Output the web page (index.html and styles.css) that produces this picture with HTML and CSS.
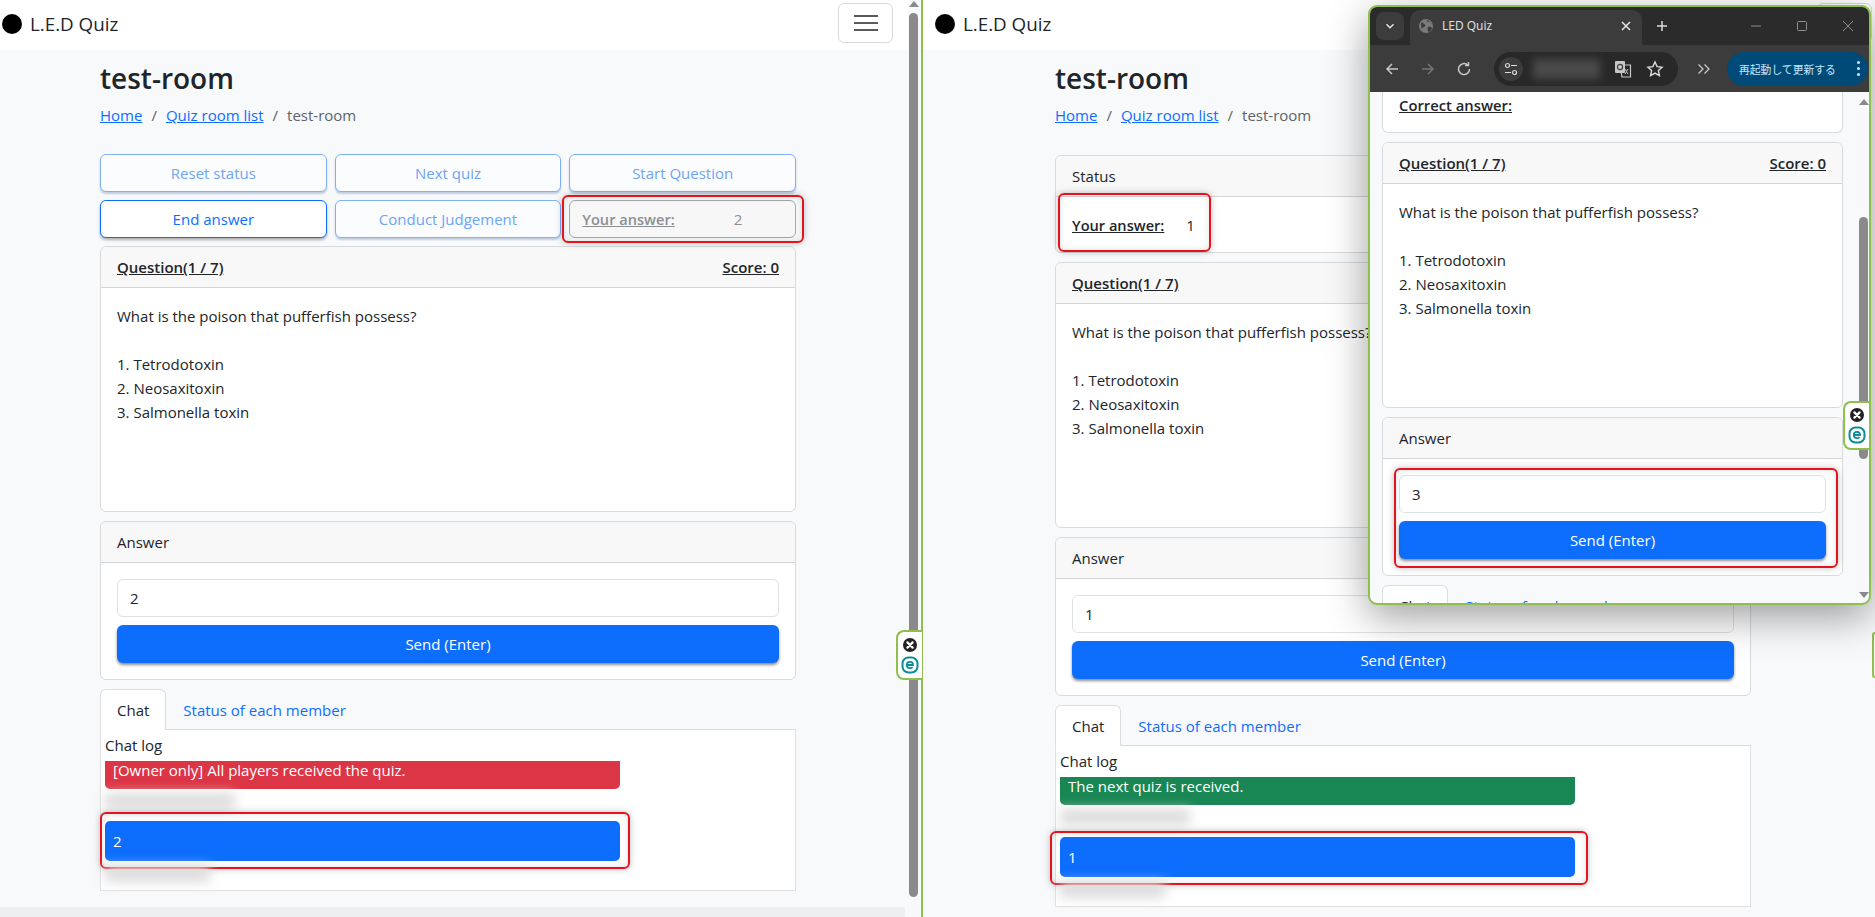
FILE: index.html
```html
<!DOCTYPE html>
<html>
<head>
  <title>LED Quiz</title>
  <link rel="stylesheet" href="styles.css">
</head>
<body>
  <div class="screen">

    <!-- owner side -->
    <section class="pane pane-owner">
      <div class="page">
        <nav class="navbar">
          <a class="brand"><span class="brand-dot"></span>L.E.D Quiz</a>
          <button class="toggler"><span></span><span></span><span></span></button>
        </nav>
        <main class="room">
          <h1>test-room</h1>
          <p class="crumbs"><a>Home</a><i>/</i><a>Quiz room list</a><i>/</i>test-room</p>

          <div class="controls">
            <button class="btn-line off">Reset status</button>
            <button class="btn-line off">Next quiz</button>
            <button class="btn-line off">Start Question</button>
            <button class="btn-line">End answer</button>
            <button class="btn-line off">Conduct Judgement</button>
            <div class="your-answer mark mark-owner"><u>Your answer:</u><span>2</span></div>
          </div>

          <div class="card">
            <div class="card-head"><u>Question(1 / 7)</u><u>Score: 0</u></div>
            <div class="card-body question">What is the poison that pufferfish possess?

1. Tetrodotoxin
2. Neosaxitoxin
3. Salmonella toxin</div>
          </div>

          <div class="card">
            <div class="card-head plain">Answer</div>
            <div class="card-body answer-form">
              <div class="input">2</div>
              <button class="btn-send">Send (Enter)</button>
            </div>
          </div>

          <div class="tabs">
            <a class="tab active">Chat</a>
            <a class="tab">Status of each member</a>
          </div>
          <div class="chat">
            <div class="chat-title">Chat log</div>
            <div class="bubble cut red">[Owner only] All players received the quiz.</div>
            <div class="who"><span class="smear w130"></span></div>
            <div class="bubble blue mark mark-bubble-l">2</div>
            <div class="who tail"><span class="smear w105"></span></div>
          </div>
        </main>
        <div class="hscroll"></div>
      </div>
      <div class="scrollbar">
        <span class="arrow-up"></span>
        <span class="thumb"></span>
      </div>
      <div class="eset eset-left">
        <svg width="16" height="16" viewBox="0 0 16 16"><circle cx="8" cy="8" r="7" fill="#222"/><path d="M5.4 5.4l5.2 5.2M10.6 5.4l-5.2 5.2" stroke="#fff" stroke-width="2.2" stroke-linecap="round"/></svg>
        <svg width="18" height="18" viewBox="0 0 18 18"><rect x="1.5" y="1.5" width="15" height="15" rx="6" fill="none" stroke="#0b8c96" stroke-width="2"/><path d="M5.8 9h6.2c0-2-1.2-3.2-3-3.2S5.8 7 5.8 9s1.2 3.2 3.2 3.2c1.2 0 2-.4 2.6-1.2" fill="none" stroke="#0b8c96" stroke-width="1.8"/></svg>
      </div>
    </section>

    <!-- player side -->
    <section class="pane pane-player">
      <nav class="navbar">
        <a class="brand"><span class="brand-dot"></span>L.E.D Quiz</a>
        <button class="toggler"><span></span><span></span><span></span></button>
      </nav>
      <main class="room">
        <h1>test-room</h1>
        <p class="crumbs"><a>Home</a><i>/</i><a>Quiz room list</a><i>/</i>test-room</p>

        <div class="card status-card">
          <div class="card-head plain">Status</div>
          <div class="card-body status-body">
            <div class="status-answer mark mark-player"><u>Your answer:</u><span>1</span></div>
          </div>
        </div>

        <div class="card">
          <div class="card-head"><u>Question(1 / 7)</u><u>Score: 0</u></div>
          <div class="card-body question">What is the poison that pufferfish possess?

1. Tetrodotoxin
2. Neosaxitoxin
3. Salmonella toxin</div>
        </div>

        <div class="card">
          <div class="card-head plain">Answer</div>
          <div class="card-body answer-form">
            <div class="input">1</div>
            <button class="btn-send">Send (Enter)</button>
          </div>
        </div>

        <div class="tabs">
          <a class="tab active">Chat</a>
          <a class="tab">Status of each member</a>
        </div>
        <div class="chat">
          <div class="chat-title">Chat log</div>
          <div class="bubble cut green">The next quiz is received.</div>
          <div class="who"><span class="smear w130"></span></div>
          <div class="bubble blue mark mark-bubble-r">1</div>
          <div class="who tail"><span class="smear w105"></span></div>
        </div>
      </main>
      <div class="eset-peek"></div>
    </section>
  </div>

  <!-- second browser window on top -->
  <div class="window">
    <div class="tabstrip">
      <span class="tab-menu">
        <svg width="12" height="12" viewBox="0 0 12 12"><path d="M2.5 4.2L6 7.7l3.500-3.500" fill="none" stroke="#e3e3e3" stroke-width="1.5"/></svg>
      </span>
      <div class="win-tab">
        <svg width="14" height="14" viewBox="0 0 14 14"><circle cx="7" cy="7" r="7" fill="#7a7a7a"/><path d="M2 3.5c2 .2 3 1 4 2.2S5.5 8 4 8.5 2 10 2.5 11.5M8 .5C7.5 2 8.5 3 10 3s3 1 3.5 2M9 8c1.5-.5 3.5 0 4 1-.5 2-2 3.5-3.5 4C9 11.5 8 9.5 9 8z" fill="#3c3c3c"/></svg>
        <span class="win-title">LED Quiz</span>
        <svg class="win-close" width="10" height="10" viewBox="0 0 10 10"><path d="M1 1l8 8M9 1L1 9" stroke="#e8e8e8" stroke-width="1.5"/></svg>
      </div>
      <svg class="new-tab" width="12" height="12" viewBox="0 0 12 12"><path d="M6 1v10M1 6h10" stroke="#dcdcdc" stroke-width="1.5"/></svg>
      <div class="win-controls">
        <svg width="12" height="12" viewBox="0 0 12 12"><path d="M1 6h10" stroke="#8f8f8f"/></svg>
        <svg width="12" height="12" viewBox="0 0 12 12"><rect x="1.5" y="1.5" width="9" height="9" rx="1" fill="none" stroke="#8f8f8f"/></svg>
        <svg width="12" height="12" viewBox="0 0 12 12"><path d="M1 1l10 10M11 1L1 11" stroke="#8f8f8f"/></svg>
      </div>
    </div>
    <div class="toolbar">
      <svg class="tool" width="16" height="16" viewBox="0 0 16 16"><path d="M14 8H3M8 3L3 8l5 5" fill="none" stroke="#c7c7c7" stroke-width="1.5"/></svg>
      <svg class="tool" width="16" height="16" viewBox="0 0 16 16"><path d="M2 8h11M8 3l5 5-5 5" fill="none" stroke="#747474" stroke-width="1.5"/></svg>
      <svg class="tool" width="16" height="16" viewBox="0 0 16 16"><path d="M13.5 8A5.5 5.5 0 1 1 11.5 3.8M12.5 1v3.500H9" fill="none" stroke="#c7c7c7" stroke-width="1.5"/></svg>
      <div class="omnibox">
        <span class="site-info">
          <svg width="14" height="14" viewBox="0 0 14 14"><circle cx="3.5" cy="3.5" r="2" fill="none" stroke="#dcdcdc" stroke-width="1.2"/><path d="M7 3.5h6M1 10.5h6" stroke="#dcdcdc" stroke-width="1.2"/><circle cx="10.5" cy="10.5" r="2" fill="none" stroke="#dcdcdc" stroke-width="1.2"/></svg>
        </span>
        <span class="url-smear"></span>
        <svg width="18" height="18" viewBox="0 0 18 18"><path d="M6 5h10.5v12H8z" fill="none" stroke="#c7c7c7" stroke-width="1.2"/><rect x="1" y="1" width="10" height="12" rx="1" fill="#c7c7c7"/><circle cx="6" cy="7" r="2.6" fill="none" stroke="#3c3c3c" stroke-width="1.2"/><path d="M11 9l3 5M14 9l-3 5" stroke="#c7c7c7"/></svg>
        <svg width="18" height="18" viewBox="0 0 18 18"><path d="M9 2l2.1 4.6 5 .6-3.7 3.400 1 5L9 13.100l-4.400 2.500 1-5L1.900 7.200l5-.6z" fill="none" stroke="#dcdcdc" stroke-width="1.4"/></svg>
      </div>
      <svg class="more" width="14" height="12" viewBox="0 0 14 12"><path d="M1.5 1.5L6 6l-4.5 4.5M7.5 1.5L12 6l-4.500 4.500" fill="none" stroke="#c7c7c7" stroke-width="1.3"/></svg>
      <div class="update-pill">再起動して更新する<b class="dots"><span></span><span></span><span></span></b></div>
    </div>
    <div class="win-body">
      <div class="win-page">
        <div class="card card-clipped">
          <div class="card-body correct"><u>Correct answer:</u></div>
        </div>
        <div class="card">
          <div class="card-head"><u>Question(1 / 7)</u><u>Score: 0</u></div>
          <div class="card-body question">What is the poison that pufferfish possess?

1. Tetrodotoxin
2. Neosaxitoxin
3. Salmonella toxin</div>
        </div>
        <div class="card">
          <div class="card-head plain">Answer</div>
          <div class="card-body answer-form">
            <div class="mark mark-form">
              <div class="input">3</div>
              <button class="btn-send">Send (Enter)</button>
            </div>
          </div>
        </div>
        <div class="tabs">
          <a class="tab active">Chat</a>
          <a class="tab">Status of each member</a>
        </div>
      </div>
      <div class="scrollbar win-scrollbar">
        <span class="arrow-up"></span>
        <span class="thumb"></span>
        <span class="arrow-down"></span>
      </div>
      <div class="eset eset-win">
        <svg width="16" height="16" viewBox="0 0 16 16"><circle cx="8" cy="8" r="7" fill="#222"/><path d="M5.4 5.4l5.2 5.2M10.6 5.4l-5.2 5.2" stroke="#fff" stroke-width="2.2" stroke-linecap="round"/></svg>
        <svg width="18" height="18" viewBox="0 0 18 18"><rect x="1.5" y="1.5" width="15" height="15" rx="6" fill="none" stroke="#0b8c96" stroke-width="2"/><path d="M5.8 9h6.2c0-2-1.2-3.2-3-3.2S5.8 7 5.8 9s1.2 3.2 3.2 3.2c1.2 0 2-.4 2.6-1.2" fill="none" stroke="#0b8c96" stroke-width="1.8"/></svg>
      </div>
    </div>
  </div>
</body>
</html>
```

FILE: styles.css
```css
* {
  box-sizing: border-box;
}
html, body {
  margin: 0;
  height: 100%;
  overflow: hidden;
}
body {
  font-family: "Open Sans", "Noto Sans", sans-serif;
  font-size: 15px;
  line-height: 24px;
  color: #212529;
  background: #f8f9fb;
}
button {
  font: inherit;
}

/* panes */
.screen {
  display: flex;
  height: 917px;
}
.pane {
  position: relative;
  height: 917px;
}
.pane-owner {
  display: flex;
  flex: 0 0 923px;
  border-right: 2px solid #8fbf4d;
}
.pane-player {
  flex: 1;
  padding-right: 3px;
}
.page {
  display: flex;
  flex-direction: column;
  width: 908px;
}
.page .room {
  flex: 1;
}
.hscroll {
  height: 10px;
  width: 905px;
  background: #eeeff0;
}

/* navbar */
.navbar {
  display: flex;
  align-items: flex-start;
  justify-content: space-between;
  height: 50px;
  padding: 3px 15px 0 2px;
  background: #fff;
}
.pane-player .navbar {
  padding: 3px 0 0 12px;
}
.brand {
  display: flex;
  align-items: center;
  height: 42px;
  font-size: 18.8px;
  color: #212529;
}
.brand-dot {
  width: 20px;
  height: 20px;
  margin-right: 8px;
  border-radius: 50%;
  background: #000;
}
.toggler {
  display: flex;
  flex-direction: column;
  align-items: center;
  justify-content: center;
  gap: 5px;
  width: 55px;
  height: 40px;
  padding: 0;
  background: #fff;
  border: 1px solid #d9dadb;
  border-radius: 6px;
}
.toggler span {
  width: 24px;
  height: 2px;
  background: #5a5a5a;
}

/* room */
.room {
  padding-left: 100px;
  width: 796px;
}
.pane-player .room {
  padding-left: 132px;
  width: 828px;
}
h1 {
  margin: 11px 0 8px;
  font-size: 28px;
  line-height: 34px;
  font-weight: 600;
}
.crumbs {
  margin: 0 0 27px;
  color: #5c636a;
}
.crumbs a {
  color: #0d6efd;
  text-decoration: underline;
}
.crumbs i {
  font-style: normal;
  margin: 0 9px;
}
.pane-player .crumbs {
  margin-bottom: 28px;
}

/* controls */
.controls {
  display: grid;
  grid-template-columns: 1fr 1fr 1fr;
  gap: 8px;
  margin-bottom: 8px;
}
.btn-line {
  height: 38px;
  padding: 0;
  color: #0d6efd;
  background: #fff;
  border: 1px solid #0d6efd;
  border-radius: 6px;
  box-shadow: 0 2px 3px rgba(0, 0, 0, .3);
}
.btn-line.off {
  color: #6ea4f3;
  background: #fbfcfe;
  border-color: #7fb0f5;
  box-shadow: 0 2px 2px rgba(90, 120, 170, .35);
}
.your-answer {
  display: flex;
  align-items: center;
  height: 38px;
  padding-left: 12px;
  color: #8b8f93;
  background: #f7f7f7;
  border: 1px solid #a6a8aa;
  border-radius: 6px;
}
.your-answer u {
  font-size: 14.6px;
  font-weight: 600;
}
.your-answer span {
  margin-left: 59px;
}

/* cards */
.card {
  margin-bottom: 9px;
  background: #fff;
  border: 1px solid #d9dadc;
  border-radius: 6px;
}
.card-head {
  display: flex;
  justify-content: space-between;
  height: 41px;
  padding: 8px 16px 0;
  background: #f8f8f9;
  border-bottom: 1px solid #d4d5d7;
  border-radius: 6px 6px 0 0;
  font-weight: 600;
}
.card-head.plain {
  font-weight: 400;
}
.card-body {
  padding: 16px;
}
.question {
  height: 223px;
  white-space: pre-line;
}
.answer-form {
  height: 116px;
}
.input {
  height: 38px;
  padding: 6px 12px;
  background: #fff;
  border: 1px solid #dee2e6;
  border-radius: 6px;
}
.btn-send {
  display: block;
  width: 100%;
  height: 38px;
  margin-top: 8px;
  color: #fff;
  background: #0d6efd;
  border: 0;
  border-radius: 6px;
  box-shadow: 0 2px 3px rgba(0, 0, 0, .45);
}
.status-card {
  margin-bottom: 9px;
}
.status-body {
  height: 55px;
  padding: 16px 16px 0;
}
.status-answer {
  display: inline-flex;
  gap: 22px;
}
.status-answer u {
  font-size: 14.6px;
  font-weight: 600;
}

/* tabs + chat */
.tabs {
  display: flex;
  height: 41px;
  margin-top: 9px;
  border-bottom: 1px solid #d9dadc;
}
.tab {
  height: 41px;
  padding: 8px 16px;
  color: #0d6efd;
  border: 1px solid transparent;
  border-radius: 6px 6px 0 0;
}
.tab.active {
  color: #212529;
  background: #fff;
  border-color: #dcdddf #dcdddf #fff;
}
.chat {
  height: 161px;
  padding: 3px 4px 0;
  background: #fff;
  border: 1px solid #dfe0e2;
  border-top: 0;
}
.chat-title {
  margin-bottom: 4px;
}
.bubble {
  width: 515px;
  padding: 0 8px;
  color: #fff;
  border-radius: 5px;
}
.bubble.cut {
  height: 28px;
  line-height: 18px;
  border-radius: 0 0 5px 5px;
}
.bubble.blue {
  height: 40px;
  line-height: 40px;
  margin-top: 8px;
}
.red {
  background: #dc3545;
}
.green {
  background: #198754;
}
.blue {
  background: #0d6efd;
}
.who {
  display: flex;
  align-items: center;
  height: 24px;
}
.who.tail {
  margin-top: 1px;
}
.smear {
  display: block;
  height: 16px;
  background: #dcdcdc;
  filter: blur(6px);
}
.w130 {
  width: 130px;
}
.w105 {
  width: 105px;
}

/* red call-outs drawn on the screenshot */
.mark {
  position: relative;
}
.mark::after {
  content: "";
  position: absolute;
  border: 2px solid #e3141c;
  border-radius: 6px;
  box-shadow: 0 0 7px rgba(0, 0, 0, .25), inset 0 0 7px rgba(0, 0, 0, .12);
  pointer-events: none;
}
.mark-owner::after {
  inset: -6px -9px -6px -8px;
}
.mark-player::after {
  inset: -20px -16px -15px -14px;
}
.mark-bubble-l::after {
  inset: -9px -10px -8px -5px;
}
.mark-bubble-r::after {
  inset: -6px -13px -8px -10px;
}
.mark-form::after {
  inset: -7px -12px -9px -5px;
}

/* scrollbars */
.scrollbar {
  display: flex;
  flex-direction: column;
  align-items: center;
  width: 11px;
  flex: none;
}
.arrow-up {
  width: 0;
  height: 0;
  margin-top: 1px;
  border: 5px solid transparent;
  border-top: 0;
  border-bottom: 6px solid #8a8a8a;
}
.arrow-down {
  width: 0;
  height: 0;
  margin-top: 123px;
  border: 5px solid transparent;
  border-bottom: 0;
  border-top: 6px solid #8a8a8a;
}
.thumb {
  width: 9px;
  height: 884px;
  margin-top: 6px;
  background: #8a8a8a;
  border-radius: 5px;
}

/* ESET tab */
.eset {
  position: absolute;
  display: flex;
  flex-direction: column;
  align-items: center;
  justify-content: center;
  gap: 3px;
  width: 26px;
  height: 50px;
  background: #fff;
  border: 2px solid #8fbf4d;
  border-right: 0;
  border-radius: 8px 0 0 8px;
}
.eset-left {
  top: 630px;
  left: 896px;
}
.eset-peek {
  position: absolute;
  top: 632px;
  right: 0;
  width: 3px;
  height: 46px;
  border: 2px solid #8fbf4d;
  border-right: 0;
  border-radius: 6px 0 0 6px;
}

/* browser window */
.window {
  position: absolute;
  top: 5px;
  left: 1368px;
  display: flex;
  flex-direction: column;
  width: 503px;
  height: 600px;
  overflow: hidden;
  background: #f8f9fb;
  border: 2px solid #8fbf4d;
  border-radius: 9px;
  box-shadow: 0 12px 40px rgba(0, 0, 0, .38);
}
.tabstrip {
  display: flex;
  flex: none;
  align-items: center;
  height: 38px;
  padding: 3px 0 0 6px;
  background: #2b2b2b;
}
.tab-menu {
  display: flex;
  align-items: center;
  justify-content: center;
  width: 28px;
  height: 28px;
  margin-bottom: 3px;
  background: #3c3c3c;
  border-radius: 8px;
}
.win-tab {
  display: flex;
  align-items: center;
  align-self: flex-end;
  width: 232px;
  height: 35px;
  margin-left: 6px;
  padding: 0 11px 3px 9px;
  background: #3c3c3c;
  border-radius: 10px 10px 0 0;
}
.win-title {
  flex: 1;
  margin-left: 9px;
  font-size: 12px;
  line-height: 16px;
  color: #e3e3e3;
}
.new-tab {
  margin: 0 0 3px 14px;
}
.win-controls {
  display: flex;
  gap: 34px;
  margin: 0 0 3px auto;
  padding-right: 15px;
}
.toolbar {
  display: flex;
  flex: none;
  align-items: center;
  height: 47px;
  padding: 0 0 0 14px;
  background: #3c3c3c;
}
.tool {
  margin-right: 20px;
}
.omnibox {
  display: flex;
  align-items: center;
  gap: 14px;
  width: 184px;
  height: 34px;
  margin-left: 2px;
  padding: 0 14px 0 5px;
  background: #282828;
  border-radius: 17px;
}
.site-info {
  display: flex;
  flex: none;
  align-items: center;
  justify-content: center;
  width: 24px;
  height: 24px;
  background: #3c3c3c;
  border-radius: 50%;
}
.url-smear {
  flex: 1;
  height: 20px;
  margin-left: -4px;
  background: #4a4a4a;
  filter: blur(4px);
}
.more {
  margin-left: 19px;
}
.update-pill {
  display: flex;
  align-items: center;
  justify-content: space-between;
  width: 141px;
  height: 34px;
  margin-left: 16px;
  padding: 0 8px 0 12px;
  font-size: 10.8px;
  line-height: 14px;
  font-family: "Noto Sans CJK JP", sans-serif;
  color: #c2e7ff;
  background: #004a77;
  border-radius: 17px;
}
.dots {
  display: flex;
  flex-direction: column;
  gap: 3px;
}
.dots span {
  width: 3px;
  height: 3px;
  background: #c2e7ff;
  border-radius: 50%;
}
.win-body {
  position: relative;
  display: flex;
  flex: 1;
  overflow: hidden;
}
.win-page {
  flex: 0 0 487px;
  padding-left: 12px;
  overflow: hidden;
}
.win-page .card {
  width: 461px;
}
.win-page .tabs {
  width: 461px;
  margin-top: 8px;
}
.card-clipped {
  border-top: 0;
  border-radius: 0 0 6px 6px;
}
.correct {
  height: 40px;
  padding: 1px 16px 0;
  font-size: 14.8px;
  font-weight: 600;
}
.win-scrollbar {
  width: 11px;
  padding-top: 6px;
  margin-left: 1px;
}
.win-scrollbar .thumb {
  height: 242px;
  margin-top: 112px;
}
.win-scrollbar .arrow-down {
  margin-top: 133px;
}
.eset-win {
  top: 309px;
  right: 0;
  left: auto;
  height: 49px;
}
```
